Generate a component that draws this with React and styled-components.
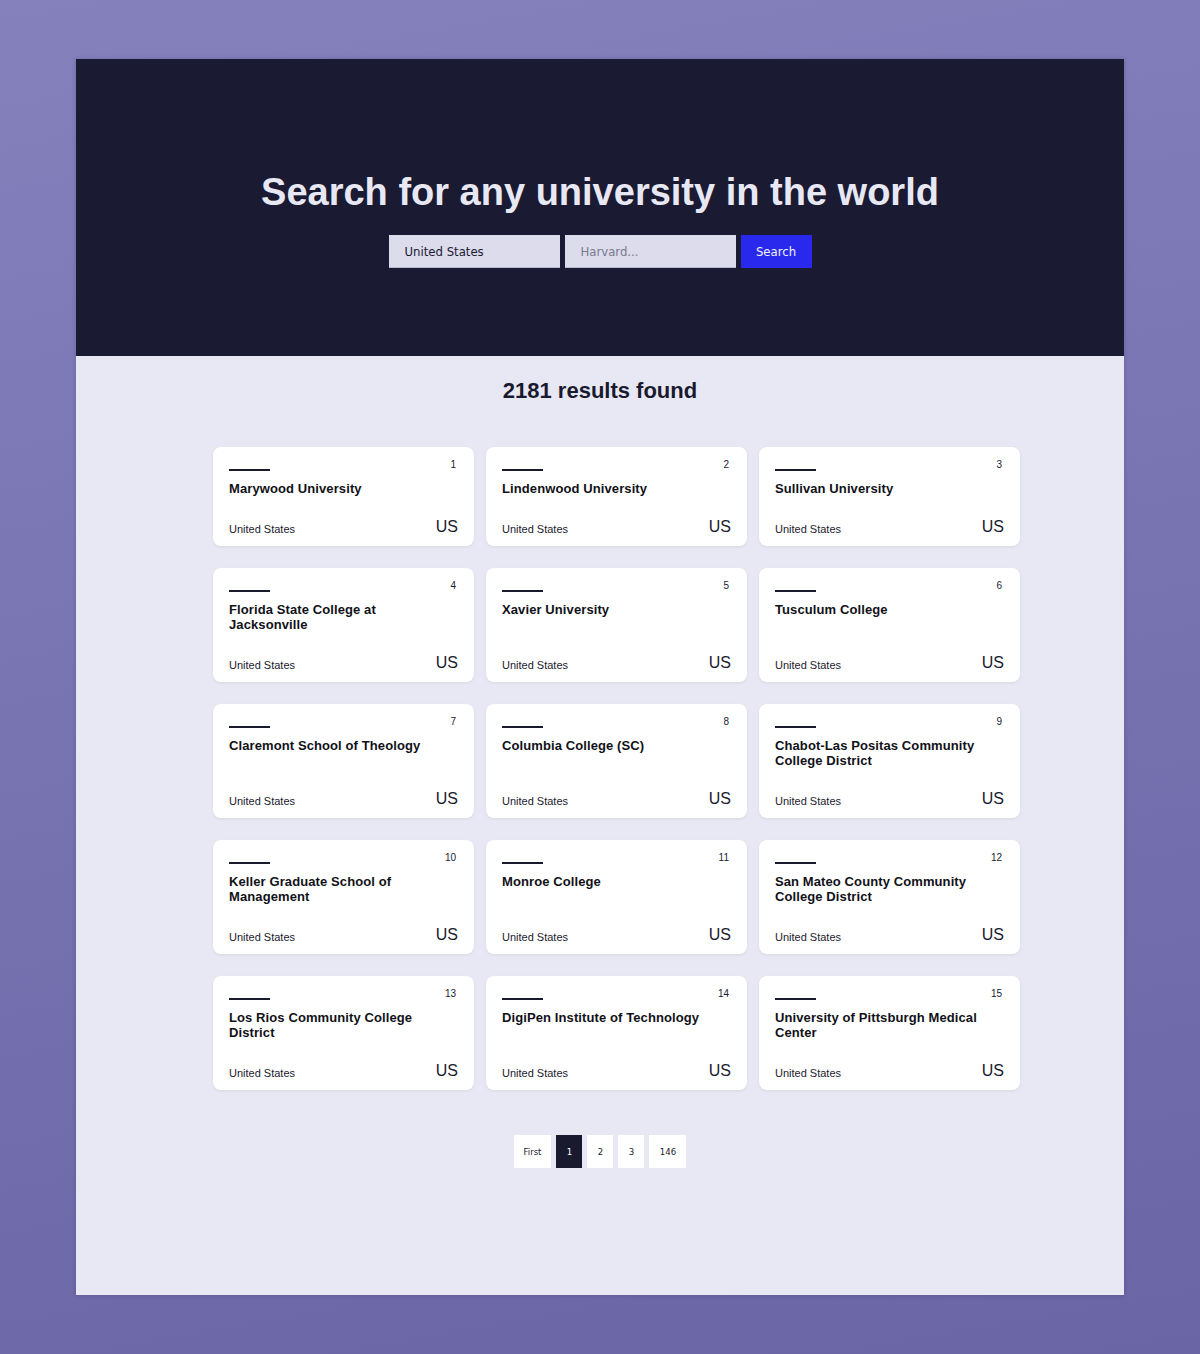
import styled, { createGlobalStyle } from "styled-components"

const GlobalStyle = createGlobalStyle`
  * { box-sizing: border-box; }
  html, body { margin: 0; padding: 0; }
  body {
    min-height: 1354px;
    font-family: "Liberation Sans", Arial, sans-serif;
    background: linear-gradient(170deg, #8581bd 0%, #7a76b3 40%, #6a65a5 100%);
  }
`

const universities = [
  "Marywood University",
  "Lindenwood University",
  "Sullivan University",
  "Florida State College at Jacksonville",
  "Xavier University",
  "Tusculum College",
  "Claremont School of Theology",
  "Columbia College (SC)",
  "Chabot-Las Positas Community College District",
  "Keller Graduate School of Management",
  "Monroe College",
  "San Mateo County Community College District",
  "Los Rios Community College District",
  "DigiPen Institute of Technology",
  "University of Pittsburgh Medical Center",
]

const pages = ["First", "1", "2", "3", "146"]

const App = () => {
  return (
    <>
      <GlobalStyle />
      <Page>
        <Panel>
          <Hero>
            <Title>Search for any university in the world</Title>
            <SearchForm onSubmit={(e) => e.preventDefault()}>
              <Field defaultValue="United States" />
              <Field placeholder="Harvard..." />
              <SearchButton type="submit">Search</SearchButton>
            </SearchForm>
          </Hero>
          <Results>
            <Count>2181 results found</Count>
            <Grid>
              {universities.map((name, i) => (
                <Card key={name}>
                  <CardTop>
                    <Rule />
                    <Index>{i + 1}</Index>
                  </CardTop>
                  <Name>{name}</Name>
                  <CardFoot>
                    <Country>United States</Country>
                    <Code>US</Code>
                  </CardFoot>
                </Card>
              ))}
            </Grid>
            <Pager>
              {pages.map((p) => (
                <PageButton key={p} active={p === "1"} wide={p === "First" || p === "146"}>
                  {p}
                </PageButton>
              ))}
            </Pager>
          </Results>
        </Panel>
      </Page>
    </>
  )
}

const Page = styled.div`
  padding: 59px 76px;
`

const Panel = styled.div`
  width: 1048px;
  background: #e8e8f4;
  box-shadow: 0 0 4px rgba(30, 30, 60, 0.25);
`

const Hero = styled.header`
  height: 297px;
  background: #1a1a32;
  display: flex;
  flex-direction: column;
  align-items: center;
  padding-top: 109px;
`

const Title = styled.h1`
  margin: 0;
  color: #e8e8f4;
  font-family: "Liberation Sans", Arial, sans-serif;
  font-size: 38px;
  line-height: 48px;
  font-weight: 700;
`

const SearchForm = styled.form`
  display: flex;
  gap: 5px;
  margin-top: 19px;
`

const Field = styled.input`
  width: 171px;
  height: 33px;
  border: none;
  outline: none;
  background: #dcdcec;
  padding: 0 16px;
  font-family: "DejaVu Sans Condensed", "DejaVu Sans", sans-serif;
  font-size: 13px;
  color: #1a1a32;
  border-bottom: 1px solid #b9b9cf;

  &::placeholder {
    color: #7a7a8c;
  }
`

const SearchButton = styled.button`
  width: 71px;
  height: 33px;
  border: none;
  background: #2929ee;
  color: #f2f2ff;
  font-family: "DejaVu Sans Condensed", "DejaVu Sans", sans-serif;
  font-size: 13px;
  cursor: pointer;
`

const Results = styled.main`
  display: flex;
  flex-direction: column;
  align-items: center;
  padding: 22px 0 127px;
`

const Count = styled.h2`
  margin: 0;
  font-size: 22px;
  line-height: 26px;
  font-weight: 700;
  color: #1a1a2e;
`

const Grid = styled.div`
  display: grid;
  grid-template-columns: repeat(3, 261px);
  column-gap: 12px;
  row-gap: 22px;
  margin-top: 43px;
  padding-left: 33px;
`

const Card = styled.article`
  display: flex;
  flex-direction: column;
  background: #ffffff;
  border-radius: 8px;
  padding: 12px 16px 10px;
  box-shadow: 0 1px 3px rgba(40, 40, 80, 0.08);
`

const CardTop = styled.div`
  display: flex;
  justify-content: space-between;
  align-items: flex-end;
  height: 12px;
`

const Rule = styled.span`
  display: block;
  width: 41px;
  height: 2px;
  background: #1a1a2e;
`

const Index = styled.span`
  align-self: flex-start;
  font-size: 10px;
  line-height: 12px;
  color: #1a1a2e;
  padding-right: 2px;
`

const Name = styled.h3`
  margin: 10px 0 0;
  font-size: 13px;
  line-height: 15px;
  font-weight: 700;
  color: #111118;
  letter-spacing: 0.1px;
`

const CardFoot = styled.div`
  display: flex;
  justify-content: space-between;
  align-items: baseline;
  margin-top: auto;
  padding-top: 21px;
`

const Country = styled.span`
  font-size: 11px;
  color: #1a1a2e;
  position: relative;
  top: 1px;
`

const Code = styled.span`
  font-size: 16px;
  line-height: 19px;
  color: #1a1a2e;
`

const Pager = styled.nav`
  display: flex;
  gap: 5px;
  margin-top: 45px;
`

const PageButton = styled.button`
  min-width: ${(p) => (p.wide ? "37px" : "26px")};
  height: 33px;
  padding: 0 ${(p) => (p.wide ? "10px" : "8px")};
  border: none;
  background: ${(p) => (p.active ? "#1a1a2e" : "#ffffff")};
  color: ${(p) => (p.active ? "#ffffff" : "#1a1a2e")};
  font-family: "DejaVu Sans Condensed", "DejaVu Sans", sans-serif;
  font-size: 9.5px;
  cursor: pointer;
`

export default App
